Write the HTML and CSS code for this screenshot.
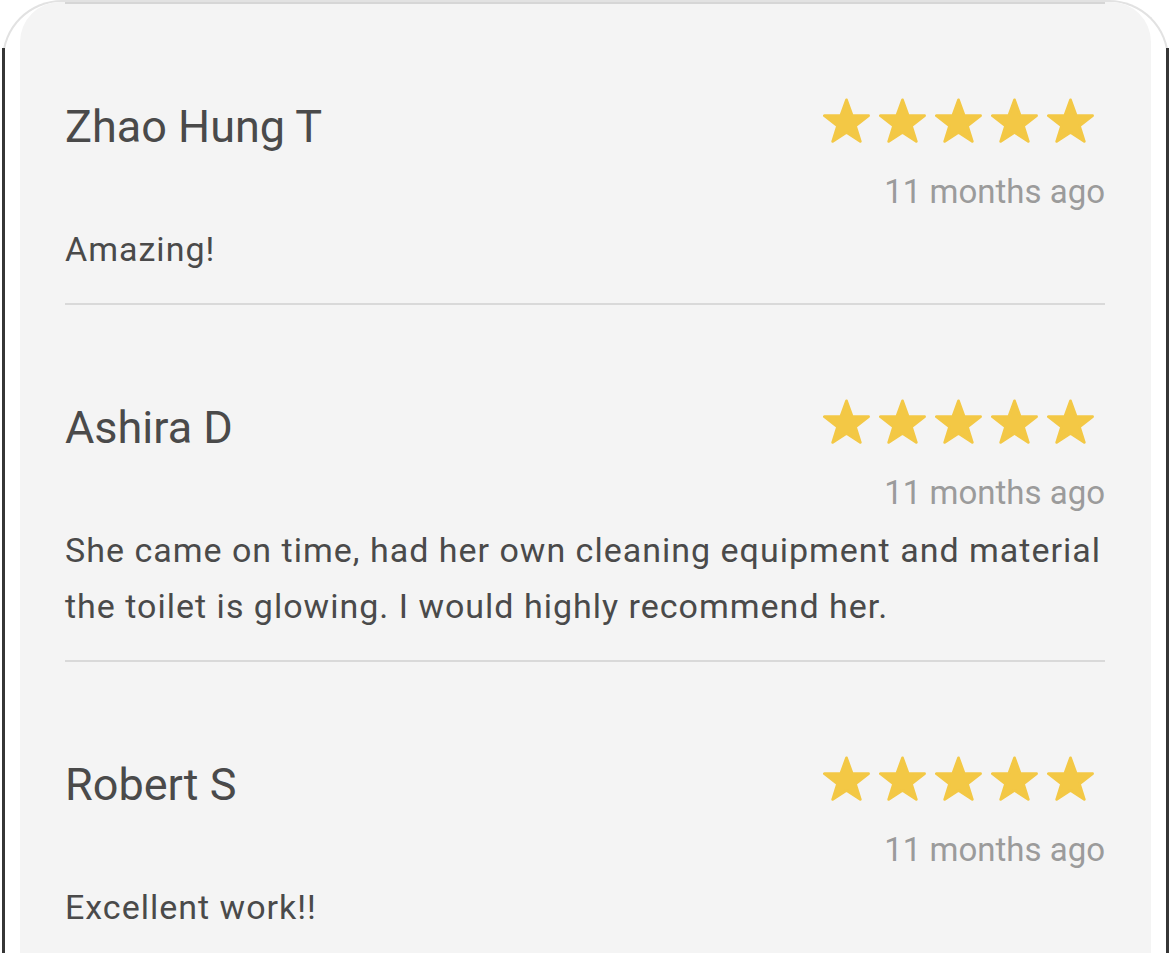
FILE: index.html
```html
<!DOCTYPE html>
<html lang="en">
<head>
<meta charset="utf-8">
<title>Reviews</title>
<link rel="stylesheet" href="styles.css">
</head>
<body>
<div class="frame">
  <div class="panel">
    <div class="prev-divider"></div>

    <section class="review">
      <div class="review-top">
        <h3 class="name">Zhao Hung T</h3>
        <div class="meta">
          <div class="stars">
            <svg class="star" viewBox="0 0 100 96"><polygon points="50,4 61.8,37 97,37.6 69,59.5 79.4,92.5 50,73.3 20.6,92.5 31,59.5 3,37.6 38.2,37"/></svg>
            <svg class="star" viewBox="0 0 100 96"><polygon points="50,4 61.8,37 97,37.6 69,59.5 79.4,92.5 50,73.3 20.6,92.5 31,59.5 3,37.6 38.2,37"/></svg>
            <svg class="star" viewBox="0 0 100 96"><polygon points="50,4 61.8,37 97,37.6 69,59.5 79.4,92.5 50,73.3 20.6,92.5 31,59.5 3,37.6 38.2,37"/></svg>
            <svg class="star" viewBox="0 0 100 96"><polygon points="50,4 61.8,37 97,37.6 69,59.5 79.4,92.5 50,73.3 20.6,92.5 31,59.5 3,37.6 38.2,37"/></svg>
            <svg class="star" viewBox="0 0 100 96"><polygon points="50,4 61.8,37 97,37.6 69,59.5 79.4,92.5 50,73.3 20.6,92.5 31,59.5 3,37.6 38.2,37"/></svg>
          </div>
          <div class="time">11 months ago</div>
        </div>
      </div>
      <p class="body">Amazing!</p>
    </section>

    <section class="review">
      <div class="review-top">
        <h3 class="name">Ashira D</h3>
        <div class="meta">
          <div class="stars">
            <svg class="star" viewBox="0 0 100 96"><polygon points="50,4 61.8,37 97,37.6 69,59.5 79.4,92.5 50,73.3 20.6,92.5 31,59.5 3,37.6 38.2,37"/></svg>
            <svg class="star" viewBox="0 0 100 96"><polygon points="50,4 61.8,37 97,37.6 69,59.5 79.4,92.5 50,73.3 20.6,92.5 31,59.5 3,37.6 38.2,37"/></svg>
            <svg class="star" viewBox="0 0 100 96"><polygon points="50,4 61.8,37 97,37.6 69,59.5 79.4,92.5 50,73.3 20.6,92.5 31,59.5 3,37.6 38.2,37"/></svg>
            <svg class="star" viewBox="0 0 100 96"><polygon points="50,4 61.8,37 97,37.6 69,59.5 79.4,92.5 50,73.3 20.6,92.5 31,59.5 3,37.6 38.2,37"/></svg>
            <svg class="star" viewBox="0 0 100 96"><polygon points="50,4 61.8,37 97,37.6 69,59.5 79.4,92.5 50,73.3 20.6,92.5 31,59.5 3,37.6 38.2,37"/></svg>
          </div>
          <div class="time">11 months ago</div>
        </div>
      </div>
      <p class="body">She came on time, had her own cleaning equipment and material the toilet is glowing. I would highly recommend her.</p>
    </section>

    <section class="review">
      <div class="review-top">
        <h3 class="name">Robert S</h3>
        <div class="meta">
          <div class="stars">
            <svg class="star" viewBox="0 0 100 96"><polygon points="50,4 61.8,37 97,37.6 69,59.5 79.4,92.5 50,73.3 20.6,92.5 31,59.5 3,37.6 38.2,37"/></svg>
            <svg class="star" viewBox="0 0 100 96"><polygon points="50,4 61.8,37 97,37.6 69,59.5 79.4,92.5 50,73.3 20.6,92.5 31,59.5 3,37.6 38.2,37"/></svg>
            <svg class="star" viewBox="0 0 100 96"><polygon points="50,4 61.8,37 97,37.6 69,59.5 79.4,92.5 50,73.3 20.6,92.5 31,59.5 3,37.6 38.2,37"/></svg>
            <svg class="star" viewBox="0 0 100 96"><polygon points="50,4 61.8,37 97,37.6 69,59.5 79.4,92.5 50,73.3 20.6,92.5 31,59.5 3,37.6 38.2,37"/></svg>
            <svg class="star" viewBox="0 0 100 96"><polygon points="50,4 61.8,37 97,37.6 69,59.5 79.4,92.5 50,73.3 20.6,92.5 31,59.5 3,37.6 38.2,37"/></svg>
          </div>
          <div class="time">11 months ago</div>
        </div>
      </div>
      <p class="body">Excellent work!!</p>
    </section>
  </div>
</div>
</body>
</html>
```

FILE: styles.css
```css
* { box-sizing: border-box; }

html, body {
  margin: 0;
  padding: 0;
  height: 953px;
  overflow: hidden;
  background: #ffffff;
  font-family: Roboto, "Noto Sans", Arial, sans-serif;
}

.frame {
  position: relative;
  margin: 0 1px 0 2px;
  height: 990px;
  border: 2px solid #e2e2e2;
  border-bottom: none;
  border-radius: 60px 60px 0 0;
  padding: 0 16px 0 16px;
  background: #ffffff;
}

/* dark device edges running down the sides */
.frame::before,
.frame::after {
  content: "";
  position: absolute;
  top: 46px;
  bottom: 0;
  width: 3px;
  background: #363636;
}

.frame::before { left: -2px; }
.frame::after { right: -2px; }

.panel {
  height: 100%;
  background: #f4f4f4;
  border-radius: 40px 40px 0 0;
  padding: 0 46px 0 45px;
}

.prev-divider {
  height: 2px;
  background: #d6d6d6;
}

.review {
  padding: 94px 0 26px;
  border-bottom: 2px solid #d9d9d9;
}

.review-top {
  display: flex;
  justify-content: space-between;
  align-items: flex-start;
}

.name {
  margin: 3px 0 0;
  font-size: 45px;
  line-height: 52px;
  font-weight: 400;
  color: #4a4a4a;
}

.meta {
  display: flex;
  flex-direction: column;
  align-items: flex-end;
}

.stars {
  display: flex;
  gap: 9px;
  margin-right: 11px;
}

.star {
  width: 47px;
  height: 45px;
  display: block;
}

.star polygon {
  fill: #f3c845;
  stroke: #f3c845;
  stroke-width: 6;
  stroke-linejoin: round;
}

.time {
  margin-top: 29px;
  font-size: 33px;
  line-height: 40px;
  color: #9b9b9b;
}

.body {
  margin: 9px 0 0;
  font-size: 34px;
  letter-spacing: 1px;
  line-height: 56px;
  color: #4a4a4a;
}
```
